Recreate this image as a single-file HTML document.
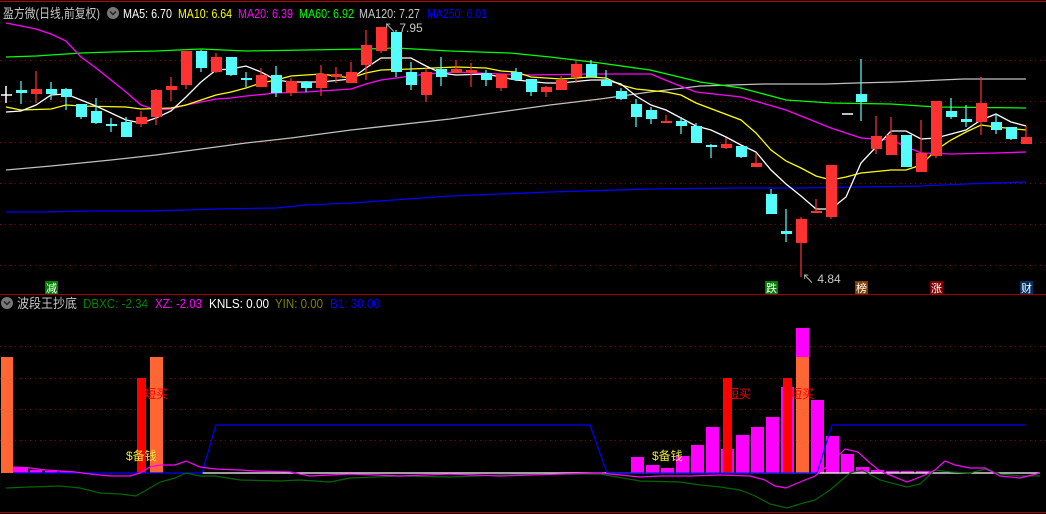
<!DOCTYPE html>
<html><head><meta charset="utf-8"><style>
html,body{margin:0;padding:0;background:#000;width:1046px;height:514px;overflow:hidden}
svg{display:block}
text{font-family:"Liberation Sans","Noto Sans CJK SC",sans-serif}
</style></head><body>
<svg width="1046" height="514" viewBox="0 0 1046 514" xmlns="http://www.w3.org/2000/svg">
<rect width="1046" height="514" fill="#000"/>
<line x1="0" y1="1.5" x2="1046" y2="1.5" stroke="#c00000" stroke-width="1"/>
<g stroke="#8a0000" stroke-width="1" stroke-dasharray="1,4">
<line x1="0" y1="60.5" x2="1046" y2="60.5"/><line x1="0" y1="101.5" x2="1046" y2="101.5"/>
<line x1="0" y1="142.5" x2="1046" y2="142.5"/><line x1="0" y1="183.5" x2="1046" y2="183.5"/>
<line x1="0" y1="224.5" x2="1046" y2="224.5"/><line x1="0" y1="265.5" x2="1046" y2="265.5"/>
<line x1="0" y1="346.5" x2="1046" y2="346.5"/><line x1="0" y1="378.5" x2="1046" y2="378.5"/>
<line x1="0" y1="409.5" x2="1046" y2="409.5"/><line x1="0" y1="440.5" x2="1046" y2="440.5"/>
</g>
<line x1="0" y1="294.5" x2="1046" y2="294.5" stroke="#a00000"/>
<line x1="0" y1="512.5" x2="1046" y2="512.5" stroke="#a00000"/>

<g font-size="13" lengthAdjust="spacingAndGlyphs">
<text x="3" y="18" fill="#c8c8c8" textLength="97" lengthAdjust="spacingAndGlyphs">盈方微(日线,前复权)</text>
<text x="123" y="18" fill="#fff" textLength="49" lengthAdjust="spacingAndGlyphs">MA5: 6.70</text>
<text x="178" y="18" fill="#ffff00" textLength="54" lengthAdjust="spacingAndGlyphs">MA10: 6.64</text>
<text x="238" y="18" fill="#ff00ff" textLength="55" lengthAdjust="spacingAndGlyphs">MA20: 6.39</text>
<text x="299" y="18" fill="#00ff00" textLength="55" lengthAdjust="spacingAndGlyphs">MA60: 6.92</text>
<text x="359" y="18" fill="#c8c8c8" textLength="61" lengthAdjust="spacingAndGlyphs">MA120: 7.27</text>
<text x="427" y="18" fill="#0000ff" textLength="60" lengthAdjust="spacingAndGlyphs">MA250: 6.01</text>
</g>
<circle cx="113" cy="13" r="6" fill="#777"/><path d="M110 11.5 L113 14.5 L116 11.5" stroke="#222" stroke-width="1.5" fill="none"/>

<g fill="none" stroke-width="1.3">
<polyline stroke="#0000ff" points="6,212 46,212 86,211 146,211 186,210 216,209 276,208 306,205 351,203 450,196 550,192 650,189 741,188 801,188 861,187 921,186 966,184 1026,182"/>
<polyline stroke="#c0c0c0" points="6,170 51,166 111,160 156,155 201,149 246,143 291,138 336,132 351,130 450,119 550,105 600,99 650,92 700,86 763,84 826,84 856,83 896,82 963,79 1026,79"/>
<polyline stroke="#00ff00" points="6,57 36,56 66,54 81,53 111,52 156,51 201,49 246,51 306,50 366,49 396,48 450,51 510,53 550,57 600,63 650,70 700,82 741,88 786,100 831,103 891,104 936,107 1026,108"/>
<polyline stroke="#ff00ff" points="6,23 36,29 51,34 66,41 81,57 96,68 111,80 126,92 141,105 156,110 171,109 186,105 201,102 216,99 231,98 246,96 276,93 306,92 336,90 351,89 366,84 381,80 396,78 426,74 456,72 501,74 531,75 591,74 651,74 670,82 696,92 741,97 786,110 831,128 861,138 891,140 921,153 951,154 996,153 1026,152"/>
<polyline stroke="#ffff00" points="6,107 21,110 51,109 66,105 81,106 126,107 141,109 171,108 186,105 201,100 216,95 231,92 246,88 261,83 276,80 291,76 321,74 336,76 351,78 366,73 381,70 411,69 456,67 486,68 501,71 516,72 531,77 561,79 591,77 606,78 621,85 636,89 666,92 681,95 696,103 741,120 756,133 771,150 786,161 801,168 816,176 831,180 846,177 861,173 891,170 906,170 921,165 936,150 951,140 966,132 981,125 996,127 1026,130"/>
<polyline stroke="#ffffff" points="6,112 21,111 36,105 51,95 66,94 81,100 96,106 111,113 126,120 141,123 156,118 171,111 186,97 201,82 216,70 231,69 246,66 261,72 276,80 291,82 321,82 351,79 366,68 381,58 411,58 426,66 441,73 456,75 486,74 501,77 516,80 546,83 561,83 591,80 606,80 621,84 636,96 651,105 666,110 681,118 696,126 711,130 726,137 741,145 756,152 771,170 786,184 801,196 816,209 831,209 846,197 861,163 876,147 891,131 906,131 921,139 936,138 951,134 966,130 981,120 996,114 1011,122 1026,126"/>
</g>

<g stroke="#54fcfc" stroke-width="1.2">
<path d="M21 81V104M51 82V100M66 88V110M81 104V119M96 98V124M111 118V132M126 117V137M201 50V72M231 57V76M246 72V87M276 66V97M306 81V92M396 30V77M411 62V90M441 57V86M486 70V86M516 68V81M531 79V96M591 60V77M606 70V86M621 88V100M636 99V127M651 107V124M681 117V134M696 123V143M711 144V158M741 146V158M771 189V214M786 209V242M861 59V121M951 98V119M966 105V127M996 114V134M1011 127V140"/>
</g>
<g fill="#54fcfc">
<rect x="16" y="90" width="11" height="3"/><rect x="46" y="89" width="11" height="5"/><rect x="61" y="89" width="11" height="8"/>
<rect x="76" y="104" width="11" height="13"/><rect x="91" y="111" width="11" height="12"/><rect x="106" y="124" width="11" height="2"/>
<rect x="121" y="122" width="11" height="15"/><rect x="196" y="51" width="11" height="17"/><rect x="226" y="57" width="11" height="18"/>
<rect x="241" y="78" width="11" height="2"/><rect x="271" y="75" width="11" height="18"/><rect x="301" y="82" width="11" height="6"/>
<rect x="391" y="32" width="11" height="40"/><rect x="406" y="72" width="11" height="13"/><rect x="436" y="69" width="11" height="8"/>
<rect x="481" y="73" width="11" height="7"/><rect x="511" y="72" width="11" height="8"/><rect x="526" y="79" width="11" height="13"/>
<rect x="586" y="64" width="11" height="13"/><rect x="601" y="80" width="11" height="6"/><rect x="616" y="91" width="11" height="8"/>
<rect x="631" y="104" width="11" height="13"/><rect x="646" y="110" width="11" height="9"/><rect x="676" y="121" width="11" height="5"/>
<rect x="691" y="126" width="11" height="17"/><rect x="706" y="145" width="11" height="2"/><rect x="736" y="146" width="11" height="11"/>
<rect x="766" y="194" width="11" height="20"/><rect x="781" y="231" width="11" height="3"/><rect x="856" y="94" width="11" height="8"/>
<rect x="901" y="135" width="11" height="32"/><rect x="946" y="111" width="11" height="6"/><rect x="961" y="119" width="11" height="3"/>
<rect x="991" y="122" width="11" height="8"/><rect x="1006" y="127" width="11" height="12"/>
</g>
<g stroke="#ff3232" stroke-width="1.2">
<path d="M36 71V103M141 111V127M156 89V125M171 77V101M186 51V89M216 53V73M261 68V87M291 78V96M321 65V96M336 67V83M351 62V83M366 30V80M381 27V53M426 68V102M456 60V73M471 63V87M501 74V91M546 86V97M561 76V90M576 61V83M666 115V123M726 138V149M756 153V167M801 217V277M816 199V213M831 165V219M876 116V154M891 117V155M921 120V172M936 101V158M981 77V135M1026 126V144"/>
</g>
<g fill="#ff3232">
<rect x="31" y="89" width="11" height="5"/><rect x="136" y="117" width="11" height="7"/><rect x="151" y="90" width="11" height="27"/>
<rect x="166" y="86" width="11" height="4"/><rect x="181" y="51" width="11" height="34"/><rect x="211" y="57" width="11" height="15"/>
<rect x="256" y="75" width="11" height="12"/><rect x="286" y="81" width="11" height="12"/><rect x="316" y="74" width="11" height="14"/>
<rect x="331" y="74" width="11" height="3"/><rect x="346" y="72" width="11" height="11"/><rect x="361" y="45" width="11" height="20"/>
<rect x="376" y="27" width="11" height="24"/><rect x="421" y="72" width="11" height="23"/><rect x="451" y="69" width="11" height="4"/>
<rect x="466" y="70" width="11" height="3"/><rect x="496" y="74" width="11" height="14"/><rect x="541" y="87" width="11" height="5"/>
<rect x="556" y="80" width="11" height="10"/><rect x="571" y="64" width="11" height="13"/><rect x="661" y="121" width="11" height="2"/>
<rect x="721" y="144" width="11" height="4"/><rect x="751" y="163" width="11" height="4"/><rect x="796" y="219" width="11" height="24"/>
<rect x="811" y="211" width="11" height="2"/><rect x="826" y="165" width="11" height="52"/><rect x="871" y="136" width="11" height="13"/>
<rect x="886" y="135" width="11" height="20"/><rect x="916" y="153" width="11" height="19"/><rect x="931" y="101" width="11" height="55"/>
<rect x="976" y="103" width="11" height="19"/><rect x="1021" y="137" width="11" height="7"/>
</g>
<g stroke="#fff" stroke-width="1.5"><path d="M6 86V103M1 95H12M842 114H853"/></g>

<text x="384" y="32" font-size="12" fill="#c8c8c8">↖ 7.95</text>
<text x="802" y="283" font-size="12" fill="#c8c8c8">↖ 4.84</text>
<g font-size="11">
<rect x="45" y="281" width="13" height="13" fill="#008000"/><text x="46" y="292" fill="#fff">减</text>
<rect x="765" y="281" width="13" height="13" fill="#008000"/><text x="766" y="292" fill="#fff">跌</text>
<rect x="855" y="281" width="13" height="13" fill="#804000"/><text x="856" y="292" fill="#fff">榜</text>
<rect x="930" y="281" width="13" height="13" fill="#800000"/><text x="931" y="292" fill="#fff">涨</text>
<rect x="1020" y="281" width="13" height="13" fill="#003060"/><text x="1021" y="292" fill="#fff">财</text>
</g>

<circle cx="7" cy="303" r="6" fill="#777"/><path d="M4 301.5 L7 304.5 L10 301.5" stroke="#222" stroke-width="1.5" fill="none"/>
<g font-size="13">
<text x="17" y="308" fill="#c8c8c8" textLength="60" lengthAdjust="spacingAndGlyphs">波段王抄底</text>
<text x="83" y="308" fill="#008000" textLength="65" lengthAdjust="spacingAndGlyphs">DBXC: -2.34</text>
<text x="155" y="308" fill="#ff00ff" textLength="47" lengthAdjust="spacingAndGlyphs">XZ: -2.03</text>
<text x="209" y="308" fill="#fff" textLength="60" lengthAdjust="spacingAndGlyphs">KNLS: 0.00</text>
<text x="275" y="308" fill="#808000" textLength="48" lengthAdjust="spacingAndGlyphs">YIN: 0.00</text>
<text x="330" y="308" fill="#0000ff" textLength="50" lengthAdjust="spacingAndGlyphs">B1: 30.00</text>
</g>

<g fill="#ff00ff">
<rect x="13" y="467" width="15" height="6"/><rect x="30" y="470" width="12" height="3"/><rect x="45" y="471" width="12" height="2"/><rect x="60" y="471" width="12" height="2"/>
<rect x="631" y="457" width="13" height="16"/><rect x="646" y="465" width="13" height="8"/><rect x="661" y="468" width="13" height="5"/>
<rect x="676" y="456" width="13" height="17"/><rect x="691" y="445" width="13" height="28"/><rect x="706" y="427" width="13" height="46"/>
<rect x="721" y="449" width="13" height="24"/><rect x="736" y="435" width="13" height="38"/><rect x="751" y="427" width="13" height="46"/>
<rect x="766" y="417" width="13" height="56"/><rect x="781" y="387" width="13" height="86"/><rect x="796" y="328" width="13" height="30"/>
<rect x="811" y="400" width="13" height="73"/><rect x="826" y="436" width="13" height="37"/><rect x="841" y="454" width="13" height="19"/>
<rect x="856" y="467" width="13" height="6"/><rect x="871" y="470" width="13" height="3"/><rect x="886" y="471" width="13" height="2"/>
<rect x="901" y="471" width="13" height="2"/><rect x="916" y="471" width="13" height="2"/>
</g>
<g fill="#ff0000"><rect x="137" y="378" width="9" height="95"/><rect x="723" y="378" width="9" height="95"/><rect x="783" y="378" width="9" height="95"/></g>
<g fill="#ff6633"><rect x="1" y="357" width="12" height="116"/><rect x="150" y="357" width="13" height="116"/><rect x="796" y="357" width="13" height="116"/></g>
<g font-size="12" fill="#ff0000"><text x="144" y="398">短买</text><text x="727" y="398">短买</text><text x="790" y="398">短买</text></g>
<g font-size="12" fill="#e8e840"><text x="126" y="460">$备钱</text><text x="652" y="460">$备钱</text></g>

<g fill="none" stroke-width="1.2">
<polyline stroke="#ffffff" points="202,473 1040,473"/>
<polyline stroke="#0000ff" points="13,473 202,473 216,425 590,425 607,473 817,473 832,425 1026,425"/>
<polyline stroke="#006600" points="6,488 30,487 60,486 80,488 100,493 120,494 136,496 160,482 175,478 186,473 200,476 215,476 240,480 280,481 300,480 330,482 350,478 400,476 450,477 500,475 560,474 600,474 640,481 680,482 700,485 720,487 740,490 755,496 770,504 787,508 800,504 815,500 830,490 850,473 862,470 880,480 907,487 920,484 935,470 950,472 970,473 985,469 1000,474 1020,476 1040,476"/>
<polyline stroke="#ff00ff" points="13,467 30,468 45,470 60,471 75,472 90,474 110,476 130,476 140,473 150,467 160,465 175,465 186,461 200,467 215,469 240,470 255,471 290,472 310,476 330,475 350,474 400,476 450,474 500,476 560,474 600,473 620,475 640,477 660,476 690,476 720,475 750,476 765,480 775,486 786,488 800,482 815,476 830,464 845,449 858,452 870,463 880,471 907,482 925,475 935,470 945,461 955,465 970,468 985,468 1000,476 1020,478 1040,473"/>
</g>
</svg>
</body></html>
